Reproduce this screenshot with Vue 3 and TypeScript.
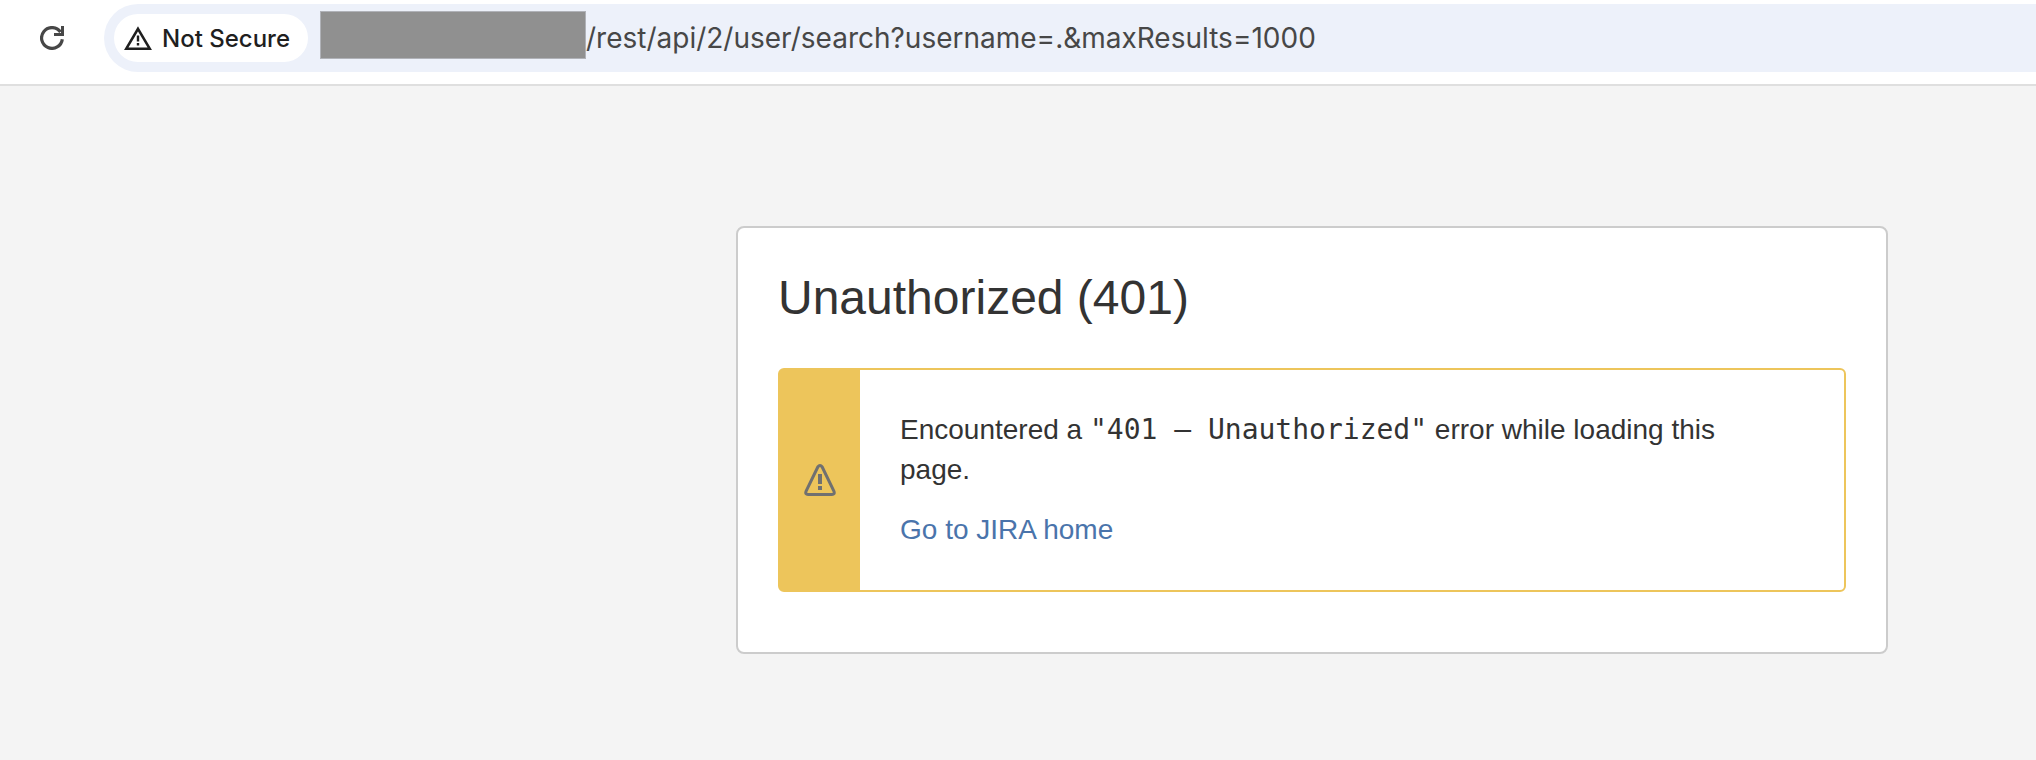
<script setup lang="ts">
import { ref } from 'vue'

const path = ref('/rest/api/2/user/search?username=.&maxResults=1000')
const status = 401
const reason = 'Unauthorized'
</script>

<template>
  <div class="window">
    <header class="toolbar">
      <button class="reload" type="button" aria-label="Reload">
        <svg viewBox="0 0 24 24" width="24" height="24" aria-hidden="true">
          <path d="M20.500 6A10.400 10.400 0 1 0 22.300 13.200" fill="none" stroke="currentColor" stroke-width="3.200" />
          <path d="M21 0h3v10h-10v-3h7z" fill="currentColor" />
        </svg>
      </button>
      <form class="omnibox" @submit.prevent>
        <button class="chip" type="button">
          <svg viewBox="0 0 28 24" width="28" height="24" aria-hidden="true">
            <path d="M14 2.800L25.700 22.700H2.300z" fill="none" stroke="currentColor" stroke-width="2.600" />
            <path d="M12.800 9.500h2.400v6h-2.400zM12.800 17h2.400v2.400h-2.400z" fill="currentColor" />
          </svg>
          <span>Not Secure</span>
        </button>
        <span class="hidden-host"></span>
        <input v-model="path" class="url" type="text" aria-label="Address" spellcheck="false" />
      </form>
    </header>

    <main class="page">
      <section class="card">
        <h1>{{ reason }} ({{ status }})</h1>
        <div class="message" role="alert">
          <div class="marker">
            <svg viewBox="0 0 32 32" width="32" height="32" aria-hidden="true">
              <path d="M13.800 3Q16 0 18.200 3L30 27.400Q31 30.400 28 30.400H4Q1 30.400 2 27.400z" fill="none" stroke="currentColor" stroke-width="3" stroke-linejoin="round" />
              <path d="M14 10h4v10h-4zM14 22h4v4h-4z" fill="currentColor" />
            </svg>
          </div>
          <div class="content">
            <p>Encountered a <code>"{{ status }} – {{ reason }}"</code> error while loading this page.</p>
            <p><a href="#">Go to JIRA home</a></p>
          </div>
        </div>
      </section>
    </main>
  </div>
</template>

<style>
body {
  margin: 0;
  background: #f4f4f4;
}
</style>

<style scoped>
.window {
  min-height: 100vh;
  background: #f4f4f4;
  color: #333;
  font-family: "Liberation Sans", Arial, sans-serif;
}

.toolbar {
  display: flex;
  align-items: center;
  padding: 4px 0 12px;
  border-bottom: 2px solid #dfdfdf;
  background: #fff;
}

button {
  border: 0;
  cursor: pointer;
}

.reload {
  display: flex;
  justify-content: center;
  width: 104px;
  padding: 0;
  background: none;
  color: #474747;
}

.omnibox {
  display: flex;
  flex: 1;
  align-items: center;
  min-width: 0;
  height: 68px;
  padding-left: 10px;
  border-radius: 34px 0 0 34px;
  background: #edf1fa;
}

.chip {
  display: flex;
  flex: none;
  align-items: center;
  gap: 10px;
  height: 48px;
  padding: 0 18px 0 10px;
  border-radius: 24px;
  background: #fff;
  color: #1f1f1f;
  font: 500 24px Inter, sans-serif;
}

.hidden-host {
  flex: none;
  box-sizing: border-box;
  width: 266px;
  height: 48px;
  margin: 0 0 6px 12px;
  border: 1px solid #b0b2b8;
  background: #909090;
}

.url {
  flex: 1;
  min-width: 0;
  padding: 0;
  border: 0;
  outline: 0;
  background: none;
  color: #474747;
  font: 400 28px Inter, sans-serif;
}

.page {
  display: grid;
  grid-template-columns: 736fr 1152fr 148fr;
  padding: 140px 0 100px;
}

.card {
  grid-column: 2;
  padding: 40px 40px 60px;
  border: 2px solid #ccc;
  border-radius: 8px;
  background: #fff;
}

h1 {
  margin: 0 0 40px;
  font-size: 48px;
  font-weight: 400;
  line-height: 60px;
}

.message {
  display: flex;
  border: 2px solid #edc55b;
  border-radius: 6px;
}

.marker {
  display: flex;
  flex: none;
  align-items: center;
  justify-content: center;
  width: 80px;
  background: #edc55b;
  color: #707070;
}

.content {
  padding: 40px 60px 40px 40px;
  font-size: 28px;
  line-height: 40px;
}

p {
  margin: 0;
}

p + p {
  margin-top: 20px;
}

code {
  font-family: "DejaVu Sans Mono", monospace;
  font-size: 28px;
  line-height: 1;
}

a {
  color: #4a74ab;
  text-decoration: none;
}
</style>
